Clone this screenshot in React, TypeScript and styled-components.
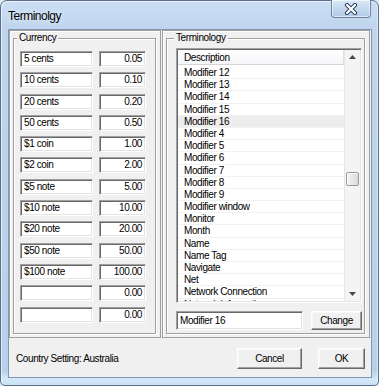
import React from "react";
import styled, { createGlobalStyle } from "styled-components";

const GlobalStyle = createGlobalStyle`
  html, body { margin: 0; padding: 0; background: #dfe9f3; }
  body {
    width: 379px; height: 386px; overflow: hidden;
    font-family: "Liberation Sans", Arial, sans-serif;
    font-size: 10px; letter-spacing: -0.4px; color: #000;
  }
  * { box-sizing: border-box; }
`;

const Window = styled.div`
  width: 379px;
  height: 386px;
  display: flex;
  flex-direction: column;
  padding: 0 6px 7px 7px;
  border: 1px solid #5b6f8c;
  border-radius: 7px 7px 5px 5px;
  background:
    linear-gradient(180deg, rgba(255,255,255,0) 370px, rgba(214,236,250,0.9) 378px, #c4def3 386px),
    linear-gradient(180deg, #cadff4 0px, #bfd5ed 28px, #b8d0ea 100%);
  box-shadow: inset 1px 1px 0 rgba(255,255,255,0.6), inset -1px 0 0 rgba(255,255,255,0.5);
`;

const TitleBar = styled.div`
  height: 28px;
  display: flex;
  align-items: flex-start;
  justify-content: space-between;
`;

const Title = styled.div`
  padding-top: 8px;
  font-size: 12px;
  line-height: 14px;
  letter-spacing: -0.5px;
  color: #000;
  text-shadow: 0 0 6px rgba(255,255,255,0.9);
`;

const CloseButton = styled.div`
  width: 40px;
  height: 18px;
  margin-top: -1px;
  margin-right: 1px;
  border: 1px solid #6b82a2;
  border-top: none;
  border-radius: 0 0 4px 4px;
  background: linear-gradient(180deg, #dbe8f6 0%, #c4d8ee 50%, #b3cbe6 100%);
  box-shadow: inset 0 0 0 1px rgba(255,255,255,0.55);
  display: flex;
  align-items: center;
  justify-content: center;
`;

const Client = styled.div`
  flex: 1;
  display: flex;
  flex-direction: column;
  background: #f0f0f0;
  border: 1px solid #8296b2;
`;

const Panels = styled.div`
  height: 308px;
  display: flex;
  gap: 1px;
  padding-right: 1px;
`;

const Panel = styled.div<{ $width?: number }>`
  ${(p) => (p.$width ? `width: ${p.$width}px;` : "flex: 1;")}
  display: flex;
  flex-direction: column;
  padding: 1px 4px 3px 3px;
  border: 1px solid #a0a0a0;
  box-shadow: inset 1px 1px 0 #ffffff;
`;

const GroupBox = styled.fieldset`
  flex: 1;
  margin: 0;
  padding: 0;
  min-width: 0;
  border: 1px solid #a0a0a0;
  box-shadow: inset 1px 1px 0 #ffffff, 1px 1px 0 #ffffff;
  display: flex;
  flex-direction: column;
`;

const Legend = styled.legend<{ $indent: number }>`
  margin-left: ${(p) => p.$indent}px;
  padding: 0 2px;
  line-height: 12px;
  font-size: 10px;
  background: #f0f0f0;
`;

const GroupBody = styled.div<{ $pad: string }>`
  flex: 1;
  display: flex;
  flex-direction: column;
  padding: ${(p) => p.$pad};
`;

const CurrencyGrid = styled.div`
  display: grid;
  grid-template-columns: 73px 47px;
  grid-auto-rows: 16px;
  column-gap: 6px;
  row-gap: 5.3px;
`;

const Field = styled.div<{ $align?: "left" | "right" }>`
  height: 100%;
  background: #ffffff;
  border-top: 1px solid #a0a0a0;
  border-left: 1px solid #a0a0a0;
  border-bottom: 1px solid #ffffff;
  border-right: 1px solid #ffffff;
  box-shadow: inset 1px 1px 0 #696969, inset -1px -1px 0 #e3e3e3;
  padding: 0 3px;
  line-height: 14px;
  text-align: ${(p) => p.$align || "left"};
  white-space: nowrap;
  overflow: hidden;
`;

const ListView = styled.div`
  height: 255px;
  display: grid;
  grid-template-columns: 1fr 16px;
  background: #ffffff;
  border-top: 1px solid #a0a0a0;
  border-left: 1px solid #a0a0a0;
  border-bottom: 1px solid #ffffff;
  border-right: 1px solid #ffffff;
  box-shadow: inset 1px 1px 0 #696969, inset -1px -1px 0 #e3e3e3;
  padding: 1px;
  overflow: hidden;
`;

const ListColumn = styled.div`
  display: flex;
  flex-direction: column;
  overflow: hidden;
  min-height: 0;
`;

const Header = styled.div`
  height: 15px;
  flex: none;
  padding-left: 6px;
  line-height: 15px;
  background: linear-gradient(180deg, #ffffff 0%, #f4f5f7 100%);
  border-bottom: 1px solid #d5d5d5;
  border-right: 1px solid #e0e0e0;
`;

const Rows = styled.div`
  flex: 1;
  padding-top: 2px;
  overflow: hidden;
`;

const Row = styled.div<{ $selected?: boolean }>`
  height: 12.2px;
  line-height: 12px;
  padding-left: 6px;
  white-space: nowrap;
  border-bottom: 1px solid #f2f2f2;
  background: ${(p) => (p.$selected ? "#ededed" : "transparent")};
`;

const ScrollBar = styled.div`
  display: flex;
  flex-direction: column;
  background: #f4f4f4;
  border-left: 1px solid #e6e6e6;
`;

const ArrowButton = styled.div`
  height: 14px;
  flex: none;
  display: flex;
  align-items: center;
  justify-content: center;
`;

const Track = styled.div`
  flex: 1;
  display: flex;
  flex-direction: column;
  padding: 0 1px;
`;

const Thumb = styled.div`
  height: 14px;
  flex: none;
  border: 1px solid #9a9a9a;
  border-radius: 2px;
  background: linear-gradient(90deg, #f3f3f3 0%, #e8e8e8 50%, #dadada 100%);
  box-shadow: inset 1px 1px 0 #ffffff;
`;

const EditRow = styled.div`
  margin-top: 8px;
  display: flex;
  gap: 8px;
  height: 19px;
`;

const EditField = styled(Field)`
  width: 127px;
  line-height: 17px;
`;

const Button = styled.div<{ $width: number }>`
  width: ${(p) => p.$width}px;
  height: 100%;
  display: flex;
  align-items: center;
  justify-content: center;
  background: #f0f0f0;
  border-top: 1px solid #ffffff;
  border-left: 1px solid #ffffff;
  border-right: 1px solid #696969;
  border-bottom: 1px solid #696969;
  box-shadow: inset -1px -1px 0 #a0a0a0, inset 1px 1px 0 #f8f8f8;
  line-height: 12px;
`;

const Footer = styled.div`
  flex: 1;
  display: flex;
  align-items: center;
  justify-content: space-between;
  padding: 2px 6px 0 7px;
`;

const Status = styled.div`
  line-height: 12px;
`;

const ButtonGroup = styled.div`
  display: flex;
  gap: 16px;
  height: 21px;
`;

const currencies: [string, string][] = [
  ["5 cents", "0.05"],
  ["10 cents", "0.10"],
  ["20 cents", "0.20"],
  ["50 cents", "0.50"],
  ["$1 coin", "1.00"],
  ["$2 coin", "2.00"],
  ["$5 note", "5.00"],
  ["$10 note", "10.00"],
  ["$20 note", "20.00"],
  ["$50 note", "50.00"],
  ["$100 note", "100.00"],
  ["", "0.00"],
  ["", "0.00"],
];

const terms = [
  "Modifier 12",
  "Modifier 13",
  "Modifier 14",
  "Modifier 15",
  "Modifier 16",
  "Modifier 4",
  "Modifier 5",
  "Modifier 6",
  "Modifier 7",
  "Modifier 8",
  "Modifier 9",
  "Modifier window",
  "Monitor",
  "Month",
  "Name",
  "Name Tag",
  "Navigate",
  "Net",
  "Network Connection",
  "Network Information",
];

const Arrow = ({ up }: { up?: boolean }) => (
  <svg width="7" height="4" viewBox="0 0 7 4">
    <path d={up ? "M0 4 L3.5 0 L7 4 Z" : "M0 0 L3.5 4 L7 0 Z"} fill="#4a4a4a" />
  </svg>
);

export default function App() {
  const selected = "Modifier 16";
  const thumbOffset = 108;
  return (
    <>
      <GlobalStyle />
      <Window>
        <TitleBar>
          <Title>Terminolgy</Title>
          <CloseButton>
            <svg width="14" height="12" viewBox="0 0 14 12">
              <path d="M3 2 L11 10 M11 2 L3 10" stroke="#2f425c" strokeWidth="4.2" strokeLinecap="round" />
              <path d="M3 2 L11 10 M11 2 L3 10" stroke="#ffffff" strokeWidth="2.2" strokeLinecap="round" />
            </svg>
          </CloseButton>
        </TitleBar>
        <Client>
          <Panels>
            <Panel $width={153}>
              <GroupBox>
                <Legend $indent={3}>Currency</Legend>
                <GroupBody $pad="7px 0 0 6px">
                  <CurrencyGrid>
                    {currencies.map(([name, value], i) => (
                      <React.Fragment key={i}>
                        <Field>{name}</Field>
                        <Field $align="right">{value}</Field>
                      </React.Fragment>
                    ))}
                  </CurrencyGrid>
                </GroupBody>
              </GroupBox>
            </Panel>
            <Panel>
              <GroupBox>
                <Legend $indent={7}>Terminology</Legend>
                <GroupBody $pad="4px 2px 3px 9px">
                  <ListView>
                    <ListColumn>
                      <Header>Description</Header>
                      <Rows>
                        {terms.map((t) => (
                          <Row key={t} $selected={t === selected}>
                            {t}
                          </Row>
                        ))}
                      </Rows>
                    </ListColumn>
                    <ScrollBar>
                      <ArrowButton>
                        <Arrow up />
                      </ArrowButton>
                      <Track>
                        <Thumb style={{ marginTop: thumbOffset }} />
                      </Track>
                      <ArrowButton>
                        <Arrow />
                      </ArrowButton>
                    </ScrollBar>
                  </ListView>
                  <EditRow>
                    <EditField>{selected}</EditField>
                    <Button $width={51}>Change</Button>
                  </EditRow>
                </GroupBody>
              </GroupBox>
            </Panel>
          </Panels>
          <Footer>
            <Status>Country Setting: Australia</Status>
            <ButtonGroup>
              <Button $width={65}>Cancel</Button>
              <Button $width={47}>OK</Button>
            </ButtonGroup>
          </Footer>
        </Client>
      </Window>
    </>
  );
}
